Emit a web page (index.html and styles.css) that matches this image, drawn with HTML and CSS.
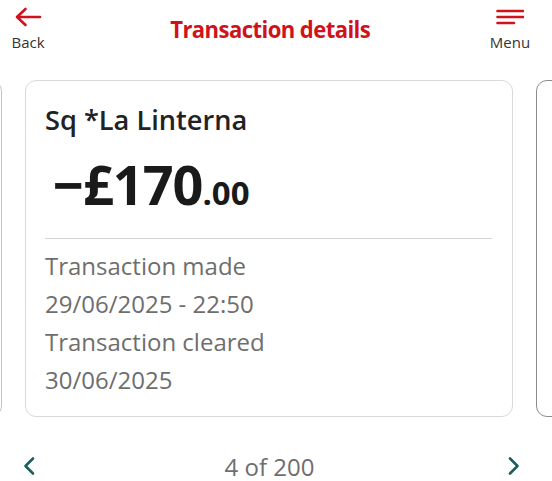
FILE: index.html
```html
<!DOCTYPE html>
<html lang="en">
<head>
    <meta charset="UTF-8">
    <meta name="viewport" content="width=device-width, initial-scale=1.0">
    <title>Transaction details</title>
    <link rel="stylesheet" href="styles.css">
</head>
<body>
    <header class="top-bar">
        <a class="top-action" href="#">
            <svg class="top-icon" width="28" height="20" viewBox="0 0 28 20">
                <path d="M26 10H3M11.5 2L3 10l8.5 8" fill="none" stroke="#d0121b" stroke-width="2.6" stroke-linecap="round" stroke-linejoin="round"/>
            </svg>
            <span>Back</span>
        </a>
        <h1 class="page-title">Transaction details</h1>
        <a class="top-action" href="#">
            <svg class="top-icon" width="28" height="20" viewBox="0 0 28 20">
                <path d="M1.5 4H27M1.5 10H27M1.5 16H18" fill="none" stroke="#d0121b" stroke-width="2.6" stroke-linecap="round"/>
            </svg>
            <span>Menu</span>
        </a>
    </header>

    <main class="carousel">
        <div class="card card-side card-prev"></div>
        <section class="card">
            <h2 class="merchant">Sq *La Linterna</h2>
            <p class="amount">&minus;£170<span class="pence">.00</span></p>
            <hr class="divider">
            <dl class="details">
                <dt>Transaction made</dt>
                <dd>29/06/2025 - 22:50</dd>
                <dt>Transaction cleared</dt>
                <dd>30/06/2025</dd>
            </dl>
        </section>
        <div class="card card-side card-next"></div>
    </main>

    <nav class="pager">
        <a class="pager-arrow" href="#">
            <svg width="14" height="20" viewBox="0 0 14 20"><path d="M11 2.5L3.5 10 11 17.5" fill="none" stroke="#1f5c5c" stroke-width="2.6" stroke-linecap="round" stroke-linejoin="round"/></svg>
        </a>
        <span class="pager-count">4 of 200</span>
        <a class="pager-arrow" href="#">
            <svg width="14" height="20" viewBox="0 0 14 20"><path d="M3 2.5L10.5 10 3 17.5" fill="none" stroke="#1f5c5c" stroke-width="2.6" stroke-linecap="round" stroke-linejoin="round"/></svg>
        </a>
    </nav>
</body>
</html>
```

FILE: styles.css
```css
/* Basic Reset & Globals */
body {
    font-family: "Open Sans", "Noto Sans", sans-serif;
    margin: 0;
    padding: 0;
    background-color: #fff;
    color: #222;
    width: 552px;
    height: 481px;
    overflow: hidden;
}

/* Header */
.top-bar {
    display: flex;
    justify-content: space-between;
    align-items: flex-start;
    height: 80px;
    padding: 0 22px 0 8px;
    box-sizing: border-box;
}
.top-action {
    display: flex;
    flex-direction: column;
    align-items: center;
    text-decoration: none;
    color: #333;
    font-size: 15px;
    padding-top: 7px;
    width: 40px;
}
.top-icon {
    display: block;
    margin-bottom: 5px;
}
.page-title {
    margin: 13px 0 0 2px;
    font-size: 23px;
    font-weight: 700;
    color: #d0121b;
    letter-spacing: -0.6px;
    transform: scaleX(0.96);
}

/* Card carousel */
.carousel {
    display: flex;
    gap: 23px;
    height: 337px;
    overflow: hidden;
}
.card {
    flex: 0 0 488px;
    box-sizing: border-box;
    border: 1.5px solid #d9d9d9;
    border-radius: 11px;
    padding: 20px 20px 0 19px;
}
.card-side {
    flex-basis: 40px;
    border-color: #c4c4c4;
}
.card-prev {
    margin-left: -39px;
}
.card-next {
    border-color: #8c8c8c;
}

.merchant {
    margin: 0;
    font-size: 27.2px;
    font-weight: 600;
    color: #222;
    line-height: 38px;
    letter-spacing: 0;
}
.amount {
    margin: 12px 0 0 8px;
    font-size: 54px;
    font-weight: 700;
    line-height: 66px;
    color: #1a1a1a;
    letter-spacing: -1px;
}
.pence {
    font-size: 33px;
    letter-spacing: 0;
}
.divider {
    border: 0;
    border-top: 1.5px solid #d2d2d2;
    margin: 12px 0 0;
}
.details {
    margin: 8px 0 0;
    font-size: 24px;
    line-height: 38px;
    color: #6e6e6e;
}
.details dt, .details dd {
    margin: 0;
}

/* Pager */
.pager {
    display: flex;
    justify-content: space-between;
    align-items: center;
    height: 64px;
    padding: 34px 31px 0 22px;
    box-sizing: border-box;
}
.pager-arrow {
    display: flex;
}
.pager-count {
    font-size: 24px;
    color: #6e6e6e;
    margin-left: -4px;
}
```
